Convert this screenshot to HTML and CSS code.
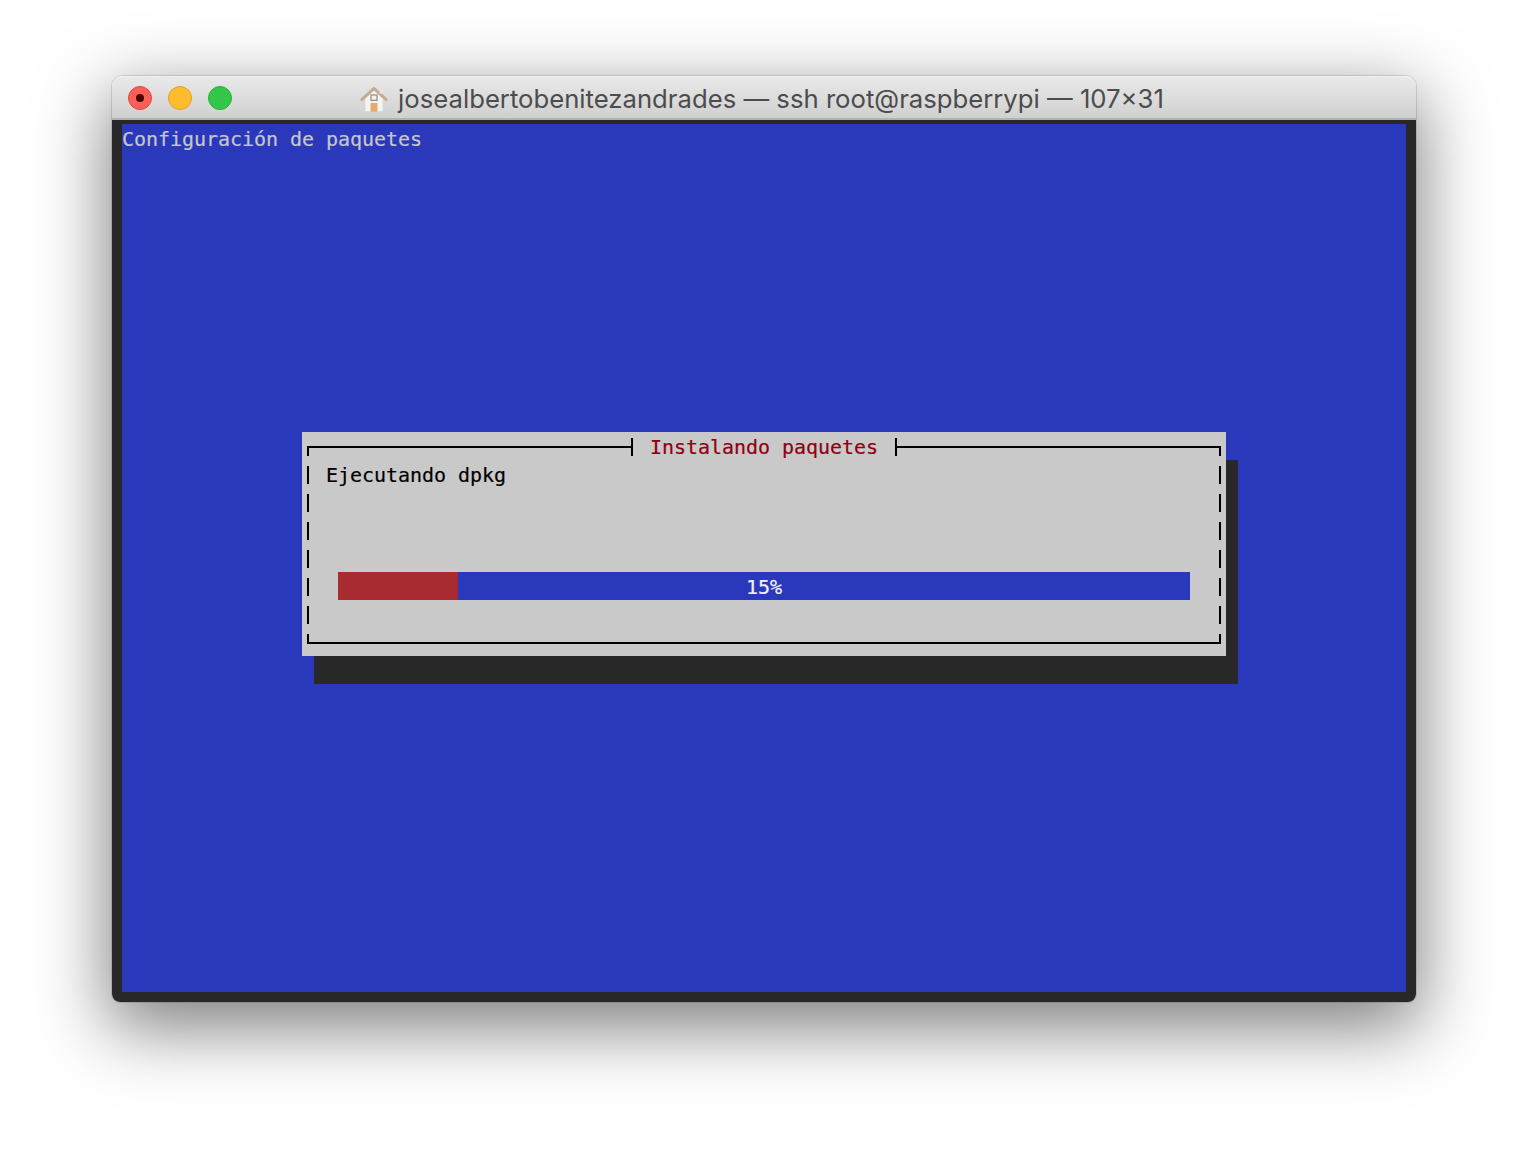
FILE: index.html
```html
<!DOCTYPE html>
<html lang="es">
<head>
<meta charset="utf-8">
<title>ssh root@raspberrypi</title>
<link rel="stylesheet" href="styles.css">
</head>
<body>
<div class="window">
  <header class="titlebar">
    <div class="lights">
      <span class="light red"><span class="dot"></span></span>
      <span class="light yellow"></span>
      <span class="light green"></span>
    </div>
    <div class="title">
      <svg class="home" width="28" height="28" viewBox="0 0 28 28" aria-hidden="true">
        <path d="M5 13.5V26.5H23V13.5L14 5.5Z" fill="#f6f4f1" stroke="#d9d6d2" stroke-width="0.7"/>
        <path d="M1.8 14.6L14 3.4L26.2 14.6" fill="none" stroke="#c4ab8e" stroke-width="2.8" stroke-linecap="round" stroke-linejoin="round"/>
        <rect x="19.6" y="3.6" width="3" height="5" fill="#e6e4e2"/>
        <rect x="11" y="10" width="6" height="5.4" fill="#f3f1ee" stroke="#9b9691" stroke-width="1.4"/>
        <rect x="10.6" y="18" width="6.8" height="8.6" fill="#e5aa6d"/>
      </svg>
      <span class="title-text">josealbertobenitezandrades — ssh root@raspberrypi — 107×31</span>
    </div>
  </header>
  <main class="terminal">
    <div class="screen">
      <div class="heading">Configuración de paquetes</div>
      <section class="dialog">
        <div class="frame">
          <div class="dialog-title">Instalando paquetes</div>
          <div class="message">Ejecutando dpkg</div>
          <div class="gauge">
            <div class="gauge-fill"></div>
            <div class="gauge-label">15%</div>
          </div>
        </div>
      </section>
    </div>
  </main>
</div>
</body>
</html>
```
FILE: styles.css
```css
* { box-sizing: border-box; }
html, body { margin: 0; height: 100%; background: #fff; overflow: hidden; }
body { padding: 76px 112px 0; }

.window {
  width: 1304px;
  height: 926px;
  display: flex;
  flex-direction: column;
  border-radius: 11px 11px 8px 8px;
  box-shadow: 0 22px 70px 4px rgba(0, 0, 0, 0.5), 0 0 0 1px rgba(0, 0, 0, 0.12);
}

.titlebar {
  height: 44px;
  flex: none;
  display: grid;
  grid-template-columns: 1fr auto 1fr;
  align-items: center;
  padding: 0 16px;
  border-radius: 11px 11px 0 0;
  background: linear-gradient(#e9e9e9, #d0d0d0);
  border-top: 1px solid #f1f1f1;
  border-bottom: 2px solid #b2b2b2;
}

.lights { display: flex; gap: 16px; }
.light {
  width: 24px;
  height: 24px;
  border-radius: 50%;
  display: flex;
  align-items: center;
  justify-content: center;
  border: 1px solid transparent;
}
.red { background: #fc5f58; border-color: #e2463f; }
.yellow { background: #febc2e; border-color: #e1a128; }
.green { background: #32c748; border-color: #2aae3a; }
.dot { width: 8px; height: 8px; border-radius: 50%; background: #4d0000; }

.title { display: flex; align-items: center; gap: 10px; padding: 2px 4px 0 0; }
.home { flex: none; }
.title-text {
  font-family: Inter, "Liberation Sans", sans-serif;
  font-size: 25.7px;
  line-height: 32px;
  color: #4c4c4c;
  white-space: nowrap;
}

.terminal {
  flex: 1;
  display: flex;
  padding: 4px 10px 10px;
  background: #282828;
  border-radius: 0 0 8px 8px;
}

.screen {
  flex: 1;
  background: #2a39bc;
  font-family: "DejaVu Sans Mono", monospace;
  font-size: 20px;
  letter-spacing: -0.04px;
  line-height: 30px;
  -webkit-text-stroke: 0.2px currentColor;
}

.heading { height: 28px; color: #c7c7c7; white-space: pre; }

.dialog {
  width: 924px;
  height: 224px;
  margin: 280px 0 0 180px;
  padding: 14px 5px 12px;
  background: #c9c9c9;
  color: #000;
  box-shadow: 12px 28px 0 #282828;
}

.frame {
  height: 198px;
  border-top: 2px solid #000;
  border-bottom: 2px solid #000;
  background-image:
    linear-gradient(#000 0 10px, transparent 10px 20px, #000 20px 28px),
    linear-gradient(#000 0 10px, transparent 10px 20px, #000 20px 28px);
  background-size: 2px 28px;
  background-repeat: repeat-y;
  background-position: left -2px, right -2px;
  background-origin: padding-box;
}

.dialog-title {
  width: 266px;
  height: 18px;
  margin: -10px 0 0 324px;
  padding-left: 17px;
  border-left: 2px solid #000;
  border-right: 2px solid #000;
  background: #c9c9c9;
  color: #900012;
  line-height: 18px;
  white-space: pre;
}

.message { height: 28px; margin: 4px 0 0 19px; white-space: pre; }

.gauge {
  width: 852px;
  height: 28px;
  margin: 84px 0 0 31px;
  display: grid;
  grid-template-rows: 28px;
  background: #2a39bc;
}
.gauge-fill, .gauge-label { grid-area: 1 / 1; }
.gauge-fill { width: 120px; background: #a92b32; }
.gauge-label { text-align: center; color: #f2f2f2; }
```
